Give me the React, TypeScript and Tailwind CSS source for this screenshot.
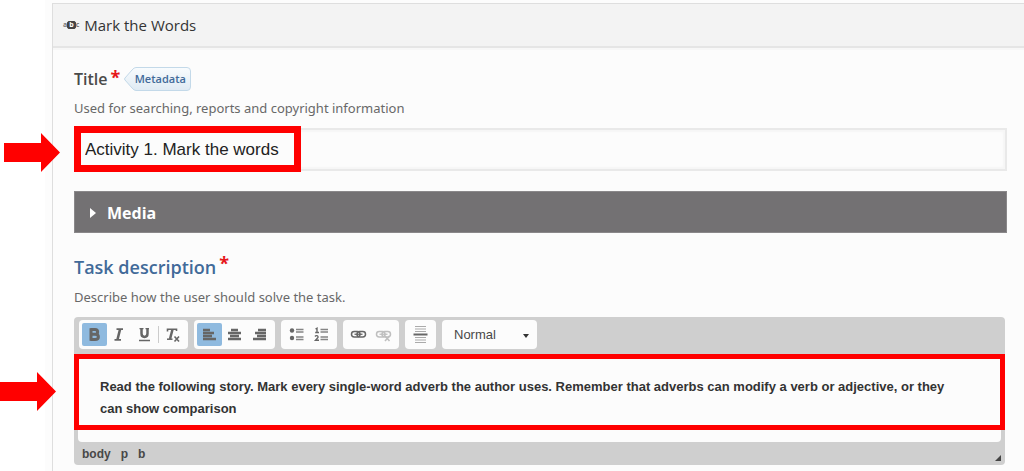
import type { ReactNode } from "react"

const uiFont = "font-['Open_Sans','Noto_Sans',sans-serif]"
const editorFont = "font-['Liberation_Sans',Arial,sans-serif]"

const Arrow = ({ className }: { className: string }) => (
    <svg
        aria-hidden="true"
        className={`absolute h-[39px] w-[56px] text-[#ff0000] ${className}`}
        viewBox="0 0 56 39"
        fill="currentColor"
    >
        <path d="M0 10H37V0L56 19.500L37 39V29H0Z" />
    </svg>
)

const Required = () => (
    <span className="self-start font-['Open_Sans',sans-serif] text-lg leading-5 font-bold text-[#e6161a]">*</span>
)

const ToolGroup = ({ children }: { children: ReactNode }) => (
    <div className="flex h-[29px] items-center rounded-sm bg-[#fcfcfc] px-[3px]">{children}</div>
)

type ToolProps = {
    label: string
    active?: boolean
    disabled?: boolean
    children: ReactNode
}

const Tool = ({ label, active, disabled, children }: ToolProps) => (
    <button
        type="button"
        aria-label={label}
        aria-pressed={active}
        disabled={disabled}
        className={`flex h-[23px] w-[25px] items-center justify-center rounded-xs text-[#666] disabled:opacity-40 ${active ? "bg-[#8fbadf]" : ""}`}
    >
        <svg width="19" height="19" viewBox="-1 -1 19 19" fill="none" stroke="currentColor" strokeWidth="2">
            {children}
        </svg>
    </button>
)

const ChainLinks = () => (
    <>
        <rect x="1.500" y="5.500" width="8.500" height="5.500" rx="2.700" strokeWidth="1.500" />
        <rect x="7" y="5.500" width="8.500" height="5.500" rx="2.700" strokeWidth="1.500" />
        <path d="M4.500 8.250H12.500" strokeWidth="1.300" />
    </>
)

const Toolbar = () => (
    <div role="toolbar" aria-label="Editor toolbar" className="flex gap-[6px] px-[5px] pt-[3px] pb-[5px]">
        <ToolGroup>
            <Tool label="Bold" active>
                <path
                    d="M4.500 3.500H9C12.500 3.500 12.500 8.300 9 8.300H5M9 8.300C13.500 8.300 13.500 13.500 9 13.500H4.500M5 2.200V14.800"
                    strokeWidth="3"
                />
            </Tool>
            <Tool label="Italic">
                <path d="M5.500 3.200H12M3.500 13.800H10" strokeWidth="1.800" />
                <path d="M9 3.500L6.500 13.500" strokeWidth="2.600" />
            </Tool>
            <Tool label="Underline">
                <path d="M5.500 2.500V7.500C5.500 12 11.500 12 11.500 7.500V2.500" strokeWidth="2.500" />
                <path d="M3.500 2.700H7.500M9.500 2.700H13" strokeWidth="1.300" />
                <path d="M3 14.500H14" strokeWidth="1.500" />
            </Tool>
            <span className="mr-px ml-px h-[17px] w-px bg-[#ccc]" />
            <Tool label="Remove format">
                <path d="M3 3.200H13M3.500 2.500V5.500M12.500 2.500V5" strokeWidth="1.600" />
                <path d="M8.500 3.500L6 13" strokeWidth="2.500" />
                <path d="M3 13.200H8.500" strokeWidth="1.500" />
                <path d="M10.500 10.500L15 15.500M15 10.500L10.500 15.500" strokeWidth="1.600" />
            </Tool>
        </ToolGroup>
        <ToolGroup>
            <Tool label="Align left" active>
                <path d="M2 4H9M2 7H13M2 10H11M2 13H15" strokeWidth="2.300" />
            </Tool>
            <Tool label="Center">
                <path d="M5 4H12M2 7H15M4 10H13M2 13H15" strokeWidth="2.300" />
            </Tool>
            <Tool label="Align right">
                <path d="M7 4H15M4 7H15M6 10H15M2 13H15" strokeWidth="2.300" />
            </Tool>
        </ToolGroup>
        <ToolGroup>
            <Tool label="Bulleted list">
                <circle cx="4" cy="4.500" r="2.200" fill="currentColor" stroke="none" />
                <circle cx="4" cy="12" r="2.200" fill="currentColor" stroke="none" />
                <path d="M8 3.500H15.500M8 6H15.500M8 11H15.500M8 13.500H15.500" strokeWidth="1.300" opacity="0.8" />
            </Tool>
            <Tool label="Numbered list">
                <path d="M2.500 3L4 2.200V6.500M2.200 6.500H6M2 10.500C3 9 5.500 9.500 5 11.500L2.500 14.300H6" strokeWidth="1.400" />
                <path d="M7.500 3.500H15M7.500 6H15M7.500 11H15M7.500 13.500H15" strokeWidth="1.300" opacity="0.8" />
            </Tool>
        </ToolGroup>
        <ToolGroup>
            <Tool label="Link">
                <ChainLinks />
            </Tool>
            <Tool label="Unlink" disabled>
                <ChainLinks />
                <path d="M10 10L14.500 15M14.500 10L10 15" strokeWidth="1.600" />
            </Tool>
        </ToolGroup>
        <ToolGroup>
            <Tool label="Insert horizontal line">
                <path d="M3 0.500H14M3 3H14M3 5.500H14M3 11.500H14M3 14H14M3 16.500H14" strokeWidth="1.200" opacity="0.55" />
                <path d="M1.500 8.500H15.500" strokeWidth="2" />
            </Tool>
        </ToolGroup>
        <div className="relative">
            <select
                aria-label="Paragraph format"
                className={`h-[29px] w-[95px] appearance-none rounded-sm bg-[#fcfcfc] pl-3 text-[13px] text-[#484848] ${editorFont}`}
            >
                <option>Normal</option>
            </select>
            <svg
                aria-hidden="true"
                className="pointer-events-none absolute top-[14px] right-2 h-1 w-[6px]"
                viewBox="0 0 6 4"
                fill="#333"
            >
                <path d="M0 0H6L3 4Z" />
            </svg>
        </div>
    </div>
)

const Editor = () => (
    <div className={`mr-0.5 rounded-sm bg-[#cfcfcf] ${editorFont}`}>
        <Toolbar />
        <div className="relative">
            <Arrow className="top-[18px] -left-[74px]" />
            <div className="mx-1 rounded-b-sm bg-[#fcfcfc] pb-3">
                <div
                    contentEditable
                    suppressContentEditableWarning
                    role="textbox"
                    aria-labelledby="task-label"
                    className="h-[76px] pt-[22px] pr-8 pl-[22px] text-[13px] leading-[22px] font-bold text-[#333] outline-none"
                >
                    Read the following story. Mark every single-word adverb the author uses. Remember that adverbs can
                    modify a verb or adjective, or they can show comparison
                </div>
            </div>
            <div className="pointer-events-none absolute inset-x-0 top-0 h-[76px] border-[5px] border-[#ff0000]" />
        </div>
        <div className="flex h-[23px] items-center gap-[10px] px-2 text-[12px] font-bold text-[#484848]">
            <span>body</span>
            <span>p</span>
            <span>b</span>
            <svg aria-hidden="true" className="mt-2 -mr-1 ml-auto h-[6px] w-[6px]" viewBox="0 0 6 6" fill="#444">
                <path d="M6 0V6H0Z" />
            </svg>
        </div>
    </div>
)

const App = () => {
    return (
        <div className={`flex min-h-screen overflow-hidden bg-white pl-[45px] ${uiFont}`}>
            <div className="flex min-w-0 flex-1 bg-[#fcfcfc] pt-[3px] pl-[7px]">
                <main className="min-w-0 flex-1 border-t border-l border-[#dedede]">
                    <header className="flex h-[44px] items-center gap-[5px] border-b-2 border-[#e5e5e5] bg-[#f3f3f3] pl-[10px] shadow-[0_2px_0_#f7f7f7]">
                        <span
                            aria-hidden="true"
                            className="flex items-center text-[7px] leading-[8px] font-bold text-[#777]"
                        >
                            a<span className="rounded-xs border border-[#444] bg-[#444] px-px leading-[6px] text-white">b</span>c
                        </span>
                        <h1 className="pt-px text-[15px] font-medium text-[#333]">Mark the Words</h1>
                    </header>

                    <div className="pr-[17px] pl-[21px]">
                        <div className="mt-[19px] flex h-[24px] items-center">
                            <label htmlFor="title" className="text-[16px] font-semibold text-[#4a4a4a]">
                                Title
                            </label>
                            <span className="ml-[3px] flex h-6">
                                <Required />
                            </span>
                            <button
                                type="button"
                                className="relative ml-1 h-[24px] w-[67px] pl-[5px] text-[11px] font-semibold text-[#416a99]"
                            >
                                <svg
                                    aria-hidden="true"
                                    className="absolute inset-0 h-full w-full"
                                    viewBox="0 0 67 24"
                                    fill="url(#tag)"
                                    stroke="#c3d9e9"
                                >
                                    <defs>
                                        <linearGradient id="tag" x2="0" y2="1">
                                            <stop stopColor="#f9fcfe" />
                                            <stop offset="1" stopColor="#dfeaf3" />
                                        </linearGradient>
                                    </defs>
                                    <path d="M12 0.500H63Q66.500 0.500 66.500 4V20Q66.500 23.500 63 23.500H12Q10 23.500 8 21L1 13Q0 12 1 11L8 3Q10 0.500 12 0.500Z" />
                                </svg>
                                <span className="relative">Metadata</span>
                            </button>
                        </div>
                        <p className="mt-2 font-['Noto_Sans',sans-serif] text-[13px] leading-[18px] text-[#686868]">
                            Used for searching, reports and copyright information
                        </p>

                        <div className="relative mt-[11px]">
                            <Arrow className="top-[5px] -left-[70px]" />
                            <input
                                id="title"
                                type="text"
                                defaultValue="Activity 1. Mark the words"
                                className={`block h-[43px] w-full border-2 border-[#e9e9e9] bg-[#fcfcfc] px-[9px] text-[17px] text-[#222] shadow-[inset_0_0_2px_2px_#f6f6f6] outline-none ${editorFont}`}
                            />
                            <div className="pointer-events-none absolute -top-[2px] left-0 h-[46px] w-[227px] border-[7px] border-[#ff0000]" />
                        </div>

                        <button
                            type="button"
                            className="mt-5 flex h-[42px] w-full items-center gap-[11px] border border-[#8a888a] bg-[#737173] pt-px pl-[15px] text-[16px] font-bold text-white"
                        >
                            <svg aria-hidden="true" className="h-[10px] w-[6px]" viewBox="0 0 6 10" fill="currentColor">
                                <path d="M0 0L6 5L0 10Z" />
                            </svg>
                            Media
                        </button>

                        <div className="mt-5 flex h-[28px] items-center">
                            <h2 id="task-label" className="text-[18px] font-semibold text-[#416a99]">
                                Task description
                            </h2>
                            <span className="ml-[3px] flex h-7">
                                <Required />
                            </span>
                        </div>
                        <p className="mt-[7px] mb-[11px] font-['Noto_Sans',sans-serif] text-[13px] leading-[18px] text-[#686868]">
                            Describe how the user should solve the task.
                        </p>
                        <Editor />
                    </div>
                </main>
            </div>
        </div>
    )
}

export default App
